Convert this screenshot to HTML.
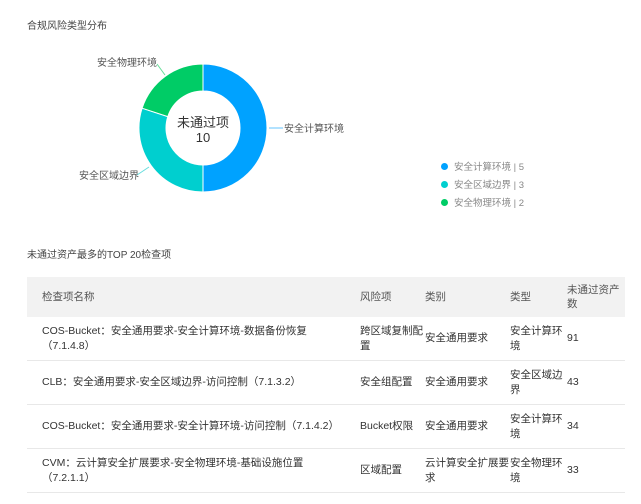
<!DOCTYPE html>
<html><head><meta charset="utf-8"><style>
body{margin:0;width:641px;height:504px;background:#fff;font-family:"Liberation Sans","Noto Sans CJK SC",sans-serif;color:#333;position:relative;overflow:hidden}
.t{position:absolute;font-size:10px;color:#444}
table{position:absolute;left:27px;top:277px;width:598px;border-collapse:collapse;font-size:10.5px;color:#333}
th{background:#f2f2f2;font-weight:normal;text-align:left;color:#555;height:40px;padding:0;vertical-align:middle;line-height:14px}
td{padding:0;height:43px;border-bottom:1px solid #e8e8e8;line-height:15px;vertical-align:middle}
.lg{position:absolute;left:441px;font-size:9.5px;color:#888}
.lg i{display:inline-block;width:7px;height:7px;border-radius:50%;margin-right:6px;vertical-align:0}
</style></head><body>
<div class="t" style="left:27px;top:17px">合规风险类型分布</div>
<svg width="641" height="230" style="position:absolute;left:0;top:0" font-family="Liberation Sans,Noto Sans CJK SC,sans-serif">
<path d="M203 64 A64 64 0 0 1 203 192 L203 165 A37 37 0 0 0 203 91Z" fill="#00a2ff" stroke="#fff" stroke-width="1"/>
<path d="M203 192 A64 64 0 0 1 142.1 108.2 L167.8 116.6 A37 37 0 0 0 203 165Z" fill="#00cfcf" stroke="#fff" stroke-width="1"/>
<path d="M142.1 108.2 A64 64 0 0 1 203 64 L203 91 A37 37 0 0 0 167.8 116.6Z" fill="#00cc66" stroke="#fff" stroke-width="1"/>
<text x="203" y="127" text-anchor="middle" font-size="13" fill="#333">未通过项</text>
<text x="203" y="142" text-anchor="middle" font-size="13" fill="#333">10</text>
<line x1="269" y1="128" x2="283" y2="128" stroke="#66c4ff"/>
<text x="284" y="132" font-size="10" fill="#555">安全计算环境</text>
<polyline points="157,64 165,75" fill="none" stroke="#66dd99"/>
<text x="97" y="66" font-size="10" fill="#555">安全物理环境</text>
<polyline points="137,175 149,167" fill="none" stroke="#66dddd"/>
<text x="79" y="179" font-size="10" fill="#555">安全区域边界</text>
</svg>
<div class="lg" style="top:159px"><i style="background:#00a2ff"></i>安全计算环境 | 5</div>
<div class="lg" style="top:177px"><i style="background:#00cfcf"></i>安全区域边界 | 3</div>
<div class="lg" style="top:195px"><i style="background:#00cc66"></i>安全物理环境 | 2</div>
<div class="t" style="left:27px;top:246px">未通过资产最多的TOP 20检查项</div>
<table>
<tr><th style="width:318px;padding-left:15px">检查项名称</th><th style="width:65px">风险项</th><th style="width:85px">类别</th><th style="width:57px">类型</th><th>未通过资产<br>数</th></tr>
<tr><td style="padding-left:15px">COS-Bucket：安全通用要求-安全计算环境-数据备份恢复<br>（7.1.4.8）</td><td>跨区域复制配<br>置</td><td>安全通用要求</td><td>安全计算环<br>境</td><td>91</td></tr>
<tr><td style="padding-left:15px">CLB：安全通用要求-安全区域边界-访问控制（7.1.3.2）</td><td>安全组配置</td><td>安全通用要求</td><td>安全区域边<br>界</td><td>43</td></tr>
<tr><td style="padding-left:15px">COS-Bucket：安全通用要求-安全计算环境-访问控制（7.1.4.2）</td><td>Bucket权限</td><td>安全通用要求</td><td>安全计算环<br>境</td><td>34</td></tr>
<tr><td style="padding-left:15px">CVM：云计算安全扩展要求-安全物理环境-基础设施位置<br>（7.2.1.1）</td><td>区域配置</td><td>云计算安全扩展要<br>求</td><td>安全物理环<br>境</td><td>33</td></tr>
</table>
</body></html>
